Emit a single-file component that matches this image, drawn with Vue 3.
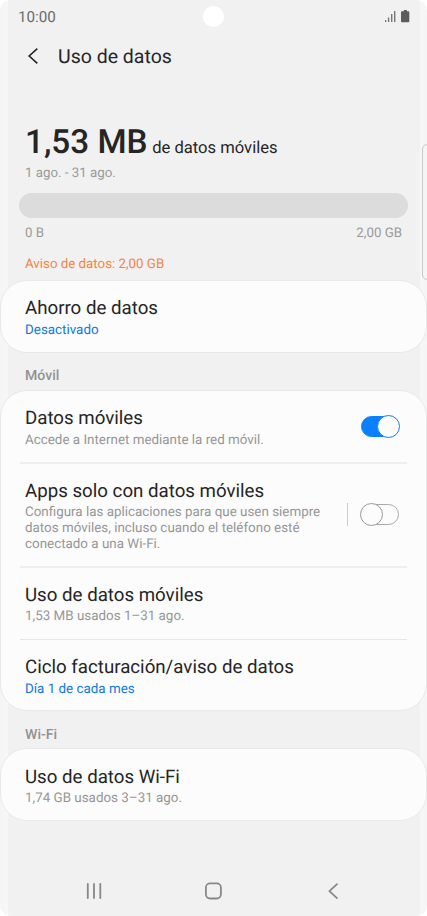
<script setup>
import { ref } from 'vue'

const mobileData = ref(true)
const mobileOnly = ref(false)
</script>

<template>
  <div class="screen">
    <header class="status">
      <span class="clock">10:00</span>
      <span class="camera"></span>
      <svg class="indicators" width="27" height="14" viewBox="0 0 27 14">
        <path d="M1 11.1h1.3v2H1zM3.9 8.5h1.4v4.6H3.9zM7 5.1h1.4v8H7zM10 2.1h1.4v11H10z" fill="#777" />
        <path d="M19.8 1h3v1.2h1.6q.9 0 .9.9v9.2q0 .9-.9.9h-6.5q-.9 0-.9-.9V3.1q0-.9.9-.9h1.9z" fill="#5d5d5d" />
      </svg>
    </header>

    <div class="toolbar">
      <svg class="back" width="12" height="18" viewBox="0 0 12 18">
        <path d="M10.3 1.7 2.2 9l8.1 7.3" fill="none" stroke="#252525" stroke-width="1.6" />
      </svg>
      <h1>Uso de datos</h1>
    </div>

    <section class="summary">
      <div class="amount"><strong>1,53 MB</strong><span>de datos móviles</span></div>
      <div class="period">1 ago. - 31 ago.</div>
      <div class="meter"></div>
      <div class="scale"><span>0 B</span><span>2,00 GB</span></div>
      <div class="warning">Aviso de datos: 2,00 GB</div>
    </section>

    <section class="card single">
      <div class="row">
        <h2>Ahorro de datos</h2>
        <p class="link">Desactivado</p>
      </div>
    </section>

    <h3>Móvil</h3>

    <section class="card mobile">
      <div class="row first">
        <div>
          <h2>Datos móviles</h2>
          <p>Accede a Internet mediante la red móvil.</p>
        </div>
        <button class="switch" :class="{ on: mobileData }" aria-label="Datos móviles" @click="mobileData = !mobileData"><i></i></button>
      </div>
      <div class="row apps">
        <div>
          <h2>Apps solo con datos móviles</h2>
          <p>Configura las aplicaciones para que usen siempre<br />datos móviles, incluso cuando el teléfono esté<br />conectado a una Wi-Fi.</p>
        </div>
        <div class="control">
          <button class="switch" :class="{ on: mobileOnly }" aria-label="Apps solo con datos móviles" @click="mobileOnly = !mobileOnly"><i></i></button>
        </div>
      </div>
      <div class="row usage">
        <h2>Uso de datos móviles</h2>
        <p>1,53 MB usados 1–31 ago.</p>
      </div>
      <div class="row cycle">
        <h2>Ciclo facturación/aviso de datos</h2>
        <p class="link">Día 1 de cada mes</p>
      </div>
    </section>

    <h3 class="wifi">Wi-Fi</h3>

    <section class="card single last">
      <div class="row">
        <h2>Uso de datos Wi-Fi</h2>
        <p>1,74 GB usados 3–31 ago.</p>
      </div>
    </section>

    <nav class="navbar">
      <svg width="20" height="20" viewBox="0 0 20 20">
        <path d="M3.8 3v14M10 3v14M16.3 3v14" stroke="#888" stroke-width="1.8" stroke-linecap="round" />
      </svg>
      <svg width="20" height="20" viewBox="0 0 20 20">
        <rect x="1.9" y="2.3" width="15" height="15.2" rx="4.2" fill="none" stroke="#888" stroke-width="1.8" />
      </svg>
      <svg width="20" height="20" viewBox="0 0 20 20">
        <path d="M14 3.1 6.4 10.1l7.6 7" fill="none" stroke="#888" stroke-width="1.8" stroke-linecap="round" stroke-linejoin="round" />
      </svg>
    </nav>
    <div class="edge-panel"></div>
  </div>
</template>

<style>
body {
  margin: 0;
  background: #fff;
}
</style>

<style scoped>
.screen {
  position: relative;
  box-sizing: border-box;
  width: 427px;
  height: 916px;
  overflow: hidden;
  border-radius: 11px;
  display: flex;
  flex-direction: column;
  background: linear-gradient(90deg, #f5f5f5 0, #f7f7f7 8px, #f1f1f1 8px, #f1f1f1 419.5px, #f7f7f7 419.5px, #f5f5f5 427px);
  font-family: Roboto, "Liberation Sans", sans-serif;
  text-rendering: geometricPrecision;
  color: #252525;
}

h1,
h2,
h3,
p {
  margin: 0;
  font-weight: 400;
  white-space: nowrap;
}

.status {
  height: 33px;
  flex: none;
  display: grid;
  grid-template-columns: 1fr 21px 1fr;
  align-items: center;
  padding: 0 16px 0 18px;
}

.clock {
  font-size: 15.2px;
  color: #6b6b6b;
}

.camera {
  width: 21px;
  height: 21px;
  margin-left: -1px;
  border-radius: 50%;
  background: #fff;
}

.indicators {
  justify-self: end;
  margin-top: -1px;
}

.toolbar {
  height: 47px;
  flex: none;
  display: flex;
  align-items: center;
  padding-left: 27px;
}

.back {
  margin: -2px 19px 0 0;
}

h1 {
  font-size: 19.5px;
  line-height: 24px;
}

.summary {
  height: 200px;
  flex: none;
  box-sizing: border-box;
  padding: 43px 19px 0;
}

.amount {
  display: flex;
  align-items: baseline;
  gap: 4.5px;
  padding-left: 6px;
  line-height: 40px;
  height: 40px;
  white-space: nowrap;
}

.amount strong {
  font-size: 33.3px;
  font-weight: 500;
}

.amount span {
  font-size: 16.6px;
}

.period {
  margin: 3px 0 0 6px;
  font-size: 13.3px;
  line-height: 16px;
  color: #9a9a9a;
}

.meter {
  height: 25px;
  margin-top: 11px;
  border-radius: 13px;
  background: #dcdcdc;
}

.scale {
  display: flex;
  justify-content: space-between;
  padding: 0 6px;
  margin-top: 8px;
  font-size: 13.3px;
  line-height: 16px;
  color: #9a9a9a;
}

.warning {
  margin: 15px 0 0 6px;
  font-size: 13.3px;
  line-height: 16px;
  color: #f2873f;
}

.card {
  flex: none;
  box-sizing: border-box;
  border: 1px solid #e9e9e9;
  border-radius: 27px;
  background: #fcfcfc;
  padding: 0 19px;
}

.single {
  height: 73px;
}

.mobile {
  height: 321px;
}

.row {
  display: block;
  padding: 16px 0 0 5px;
}

h2 {
  font-size: 18.7px;
  line-height: 22px;
}

p {
  margin-top: 4px;
  font-size: 13.4px;
  line-height: 16px;
  color: #969696;
}

.link {
  color: #0f79e2;
}

h3 {
  height: 37px;
  flex: none;
  padding-left: 25px;
  font-size: 14.1px;
  font-weight: 500;
  line-height: 47px;
  color: #929292;
}

h3.wifi {
  line-height: 49px;
}

.mobile .row {
  box-sizing: border-box;
  border-bottom: 2px solid #eee;
}

.mobile .first {
  height: 73px;
  display: flex;
  justify-content: space-between;
}

.mobile .apps {
  height: 104px;
  display: flex;
  justify-content: space-between;
}

.apps p {
  margin-top: 3px;
}

.mobile .usage {
  height: 72px;
  border-bottom: 1px solid #e6e6e6;
}

.usage p {
  margin-top: 3px;
}

.mobile .cycle {
  border-bottom: 0;
}

.last .row {
  padding-top: 17px;
}

.last p {
  margin-top: 3px;
}

.switch {
  box-sizing: border-box;
  position: relative;
  width: 38px;
  height: 21px;
  margin: 9px 8px 0 0;
  padding: 0;
  border: 1.4px solid #aaa;
  border-radius: 11px;
  background: #fcfcfc;
}

.switch i {
  position: absolute;
  box-sizing: border-box;
  left: -2px;
  top: -2px;
  width: 23px;
  height: 23px;
  border: 1.4px solid #999;
  border-radius: 50%;
  background: #fcfcfc;
}

.switch.on {
  border-color: #0a80ff;
  background: #0a80ff;
}

.switch.on i {
  left: auto;
  right: -1.5px;
  border-color: #0a80ff;
}

.control {
  box-sizing: border-box;
  height: 23px;
  margin-top: 23px;
  padding-left: 13px;
  border-left: 1px solid #ccc;
}

.control .switch {
  display: block;
  margin-top: 1px;
}

.navbar {
  margin-top: auto;
  height: 50px;
  flex: none;
  display: flex;
  justify-content: space-between;
  align-items: center;
  padding: 0 84px;
}

.edge-panel {
  position: absolute;
  box-sizing: border-box;
  left: 422px;
  top: 144px;
  width: 10px;
  height: 136px;
  border: 1px solid #c9c9c9;
  border-radius: 5px;
  background: #f5f5f5;
}
</style>
